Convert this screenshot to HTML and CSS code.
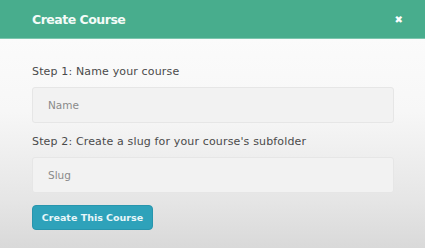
FILE: index.html
```html
<!DOCTYPE html>
<html>
<head>
<meta charset="utf-8">
<link rel="stylesheet" href="styles.css">
</head>
<body>
<div class="modal">
  <div class="modal-header">
    <span class="modal-title">Create Course</span>
    <span class="close">&#10006;</span>
  </div>
  <div class="modal-body">
    <label class="label">Step 1: Name your course</label>
    <div class="input">Name</div>
    <label class="label label-2">Step 2: Create a slug for your course's subfolder</label>
    <div class="input">Slug</div>
    <button class="btn">Create This Course</button>
  </div>
</div>
</body>
</html>
```
FILE: styles.css
```css
html, body {
  margin: 0;
  padding: 0;
  width: 425px;
  height: 248px;
  overflow: hidden;
}
body {
  font-family: "DejaVu Sans", "Open Sans", sans-serif;
  background: linear-gradient(180deg, #fdfdfd 0%, #f7f7f7 45%, #e6e6e6 80%, #d9d9d9 100%);
}
.modal {
  height: 248px;
  display: flex;
  flex-direction: column;
}
.modal-header {
  height: 38px;
  background: #48ad8d;
  border-bottom: 1px solid #7cc6ae;
  display: flex;
  align-items: center;
  justify-content: space-between;
  padding: 0 22px 0 32px;
}
.modal-title {
  color: #f4fbf8;
  font-weight: bold;
  font-size: 12.5px;
  letter-spacing: -0.5px;
}
.close {
  color: #ffffff;
  font-size: 10px;
  font-weight: bold;
}
.modal-body {
  padding: 26px 31px 0 32px;
  display: flex;
  flex-direction: column;
  align-items: flex-start;
}
.label {
  color: #4a4a4a;
  font-size: 11px;
  letter-spacing: 0.15px;
  line-height: 14px;
  margin-bottom: 8px;
}
.label-2 {
  margin-top: 12px;
}
.input {
  box-sizing: border-box;
  width: 362px;
  height: 36px;
  background: #f2f2f2;
  border: 1px solid #e6e6e6;
  border-radius: 3px;
  color: #8a8a8a;
  font-size: 10.5px;
  display: flex;
  align-items: center;
  padding-left: 15px;
}
.btn {
  margin-top: 12px;
  width: 121px;
  height: 25px;
  background: #2ea2ba;
  border: 1px solid #2895ad;
  border-radius: 4px;
  color: #e8f6f9;
  font-family: "DejaVu Sans", sans-serif;
  font-size: 9.5px;
  font-weight: 600;
  padding: 0;
}
```
